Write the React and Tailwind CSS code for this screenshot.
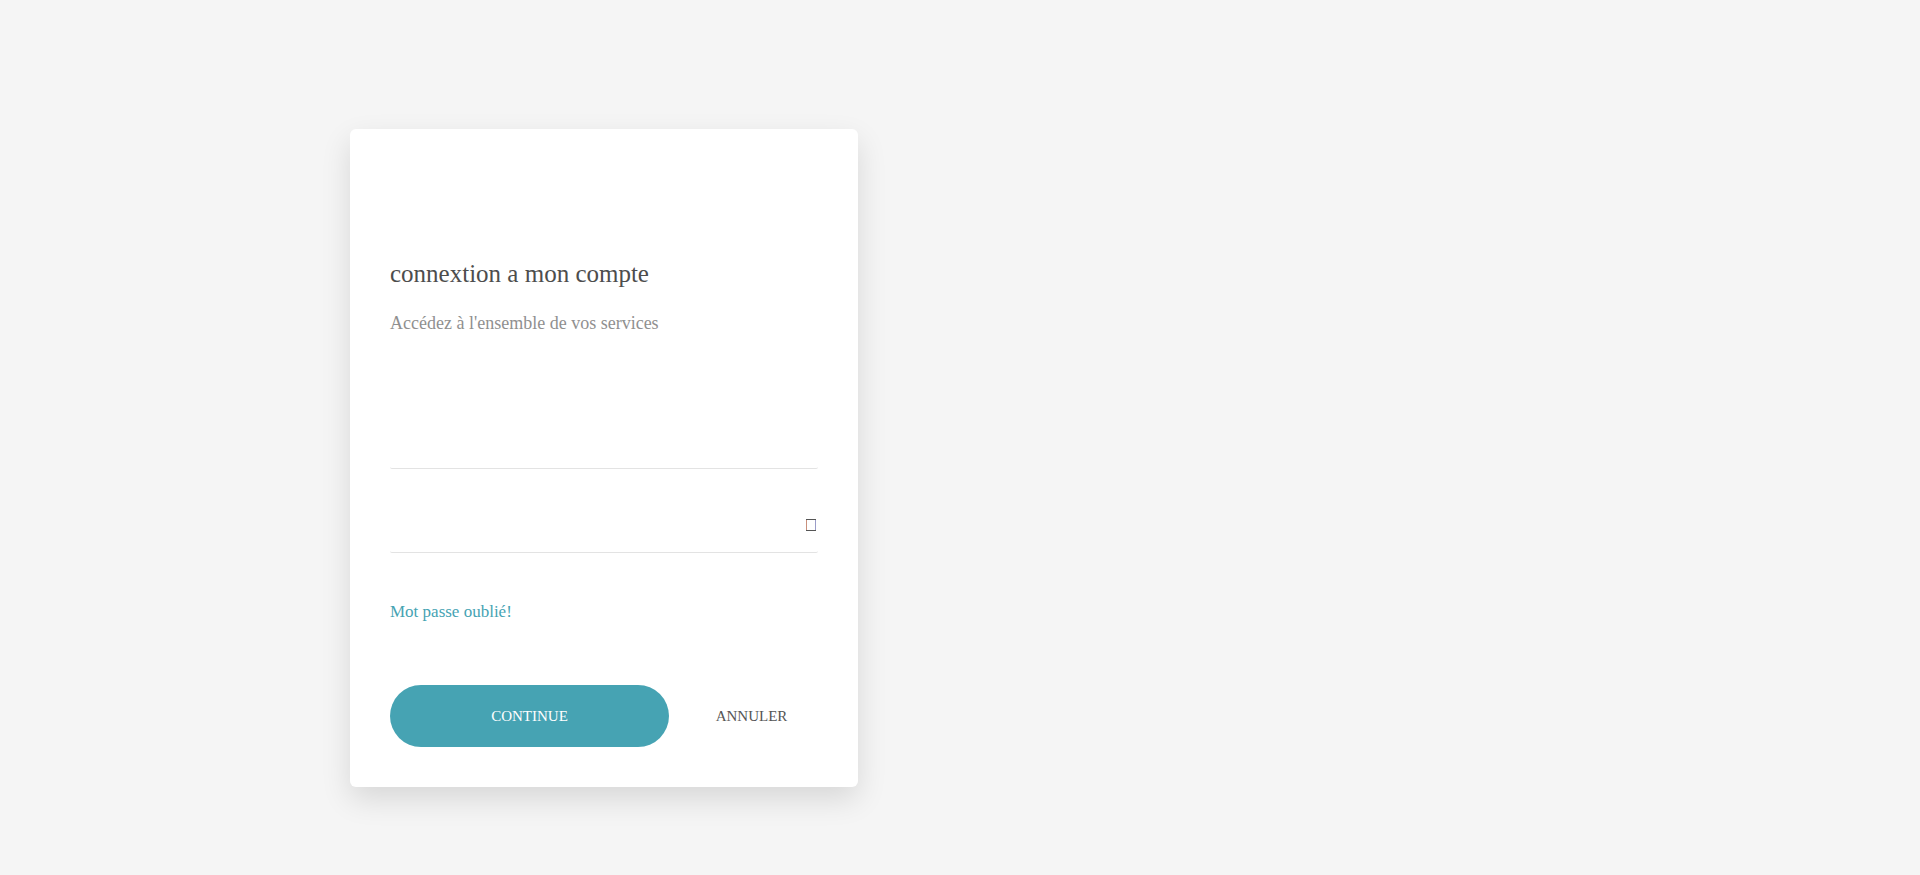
export default function App() {
  return (
    <main className="min-h-screen bg-[#f5f5f5] font-['Liberation_Serif',serif] pt-[129px] pb-[88px] pl-[350px]">
      <form className="w-full max-w-[508px] rounded-md bg-white px-10 pt-[129px] pb-10 shadow-[0_12px_30px_rgba(0,0,0,0.12)]" onSubmit={(e) => e.preventDefault()}>
        <h1 className="text-[25px] leading-8 text-[#4d4d4d]">connextion a mon compte</h1>
        <p className="mt-[19px] text-lg leading-7 text-[#909090]">Accédez à l'ensemble de vos services</p>
        <input type="text" aria-label="Identifiant" className="mt-[84px] block h-12 w-full rounded-xs border-b border-[#e3e3e3] outline-none" />
        <div className="mt-9 flex h-12 items-center rounded-xs border-b border-[#e3e3e3]">
          <input type="password" aria-label="Mot de passe" className="h-full min-w-0 flex-1 outline-none" />
          <button type="button" aria-label="Afficher le mot de passe" className="mr-0.5 mb-[7px]">
            <svg width="10" height="12" viewBox="0 0 10 12" fill="none">
              <path d="M0 .5h10M0 11.5h10" stroke="#555" />
              <path d="M.5 1v10" stroke="#c9907c" />
              <path d="M9.5 1v10" stroke="#9a9cc8" />
            </svg>
          </button>
        </div>
        <a href="#" className="mt-[47px] block w-fit text-[17px] leading-6 text-[#46a3b3]">Mot passe oublié!</a>
        <div className="mt-[61px] flex items-center">
          <button type="submit" className="h-[62px] w-[279px] rounded-full bg-[#46a3b3] text-[15px] text-white">CONTINUE</button>
          <button type="button" className="flex-1 pl-4 text-[15px] text-[#555]">ANNULER</button>
        </div>
      </form>
    </main>
  );
}
